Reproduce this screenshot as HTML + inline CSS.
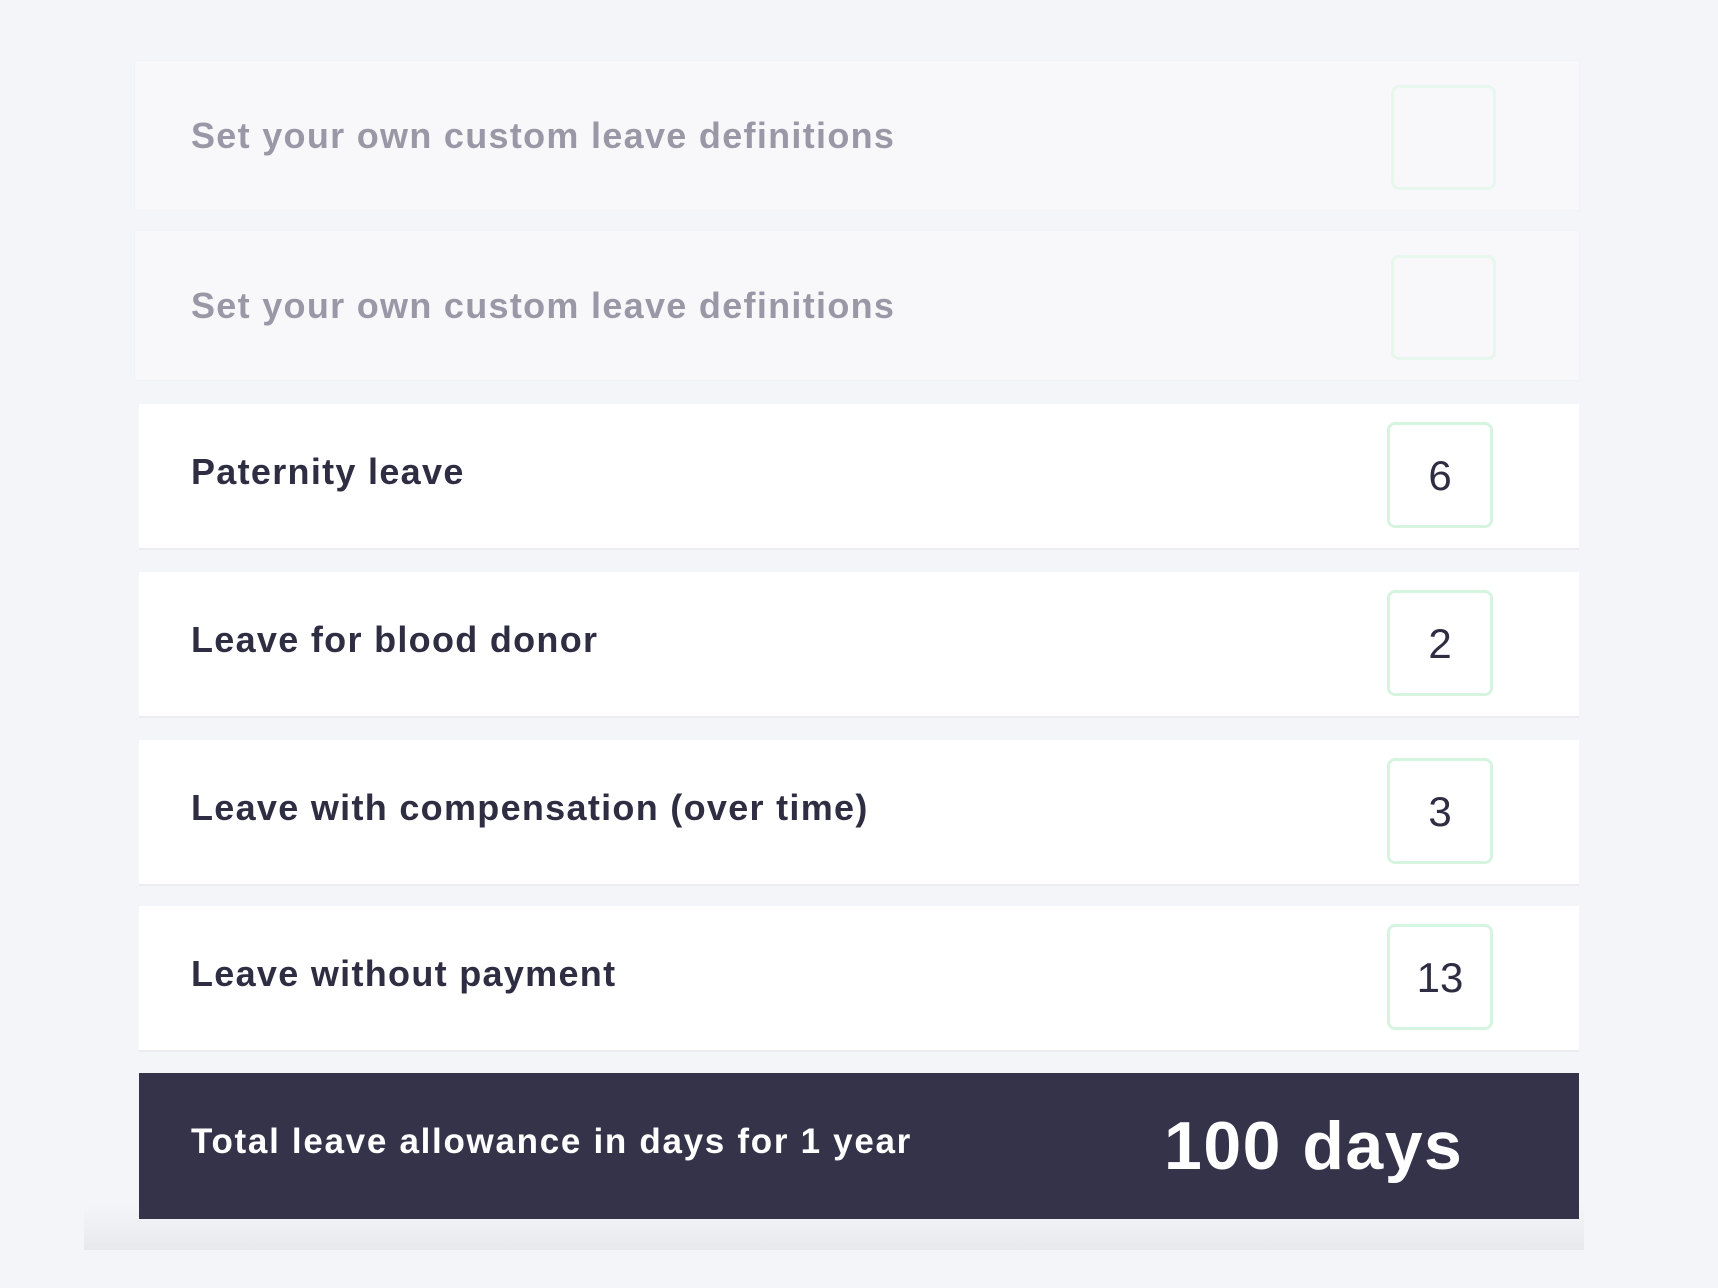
<!DOCTYPE html>
<html><head><style>
body{margin:0;width:1718px;height:1288px;background:#f4f5f8;position:relative;overflow:hidden;font-family:"Liberation Sans",sans-serif;}
.row{position:absolute;left:139px;width:1440px;height:144px;background:#fff;box-shadow:0 2px 0 #ececf0;}
.row.l{left:135px;width:1444px;height:149px;background:#f8f8fa;box-shadow:0 0 0 1px #f1f2f5;}
.t{position:absolute;left:52px;top:-4px;line-height:144px;font-size:36px;font-weight:bold;color:#2f2d42;letter-spacing:1.3px;}
.l .t{left:56px;top:0;line-height:149px;color:#9a98a6;letter-spacing:1.3px;}
.box{position:absolute;left:1248px;top:18px;width:106px;height:106px;border:3px solid #d6f5e0;border-radius:8px;box-sizing:border-box;text-align:center;line-height:102px;font-size:42px;color:#2f2d42;}
.l .box{left:1256px;top:24px;width:105px;height:105px;border-color:#e8f7ee;}
.dark{position:absolute;left:139px;top:1073px;width:1440px;height:146px;background:#353349;}
.shadow{position:absolute;left:84px;top:1205px;width:1500px;height:45px;background:linear-gradient(#f4f5f8,#e8e9ed);}
</style></head><body>
<div class="shadow"></div>
<div class="row l" style="top:61px"><div class="t">Set your own custom leave definitions</div><div class="box"></div></div>
<div class="row l" style="top:231px"><div class="t">Set your own custom leave definitions</div><div class="box"></div></div>
<div class="row" style="top:404px"><div class="t">Paternity leave</div><div class="box">6</div></div>
<div class="row" style="top:572px"><div class="t">Leave for blood donor</div><div class="box">2</div></div>
<div class="row" style="top:740px"><div class="t">Leave with compensation (over time)</div><div class="box">3</div></div>
<div class="row" style="top:906px"><div class="t">Leave without payment</div><div class="box">13</div></div>
<div class="dark">
<div style="position:absolute;left:52px;top:-4px;line-height:146px;font-size:35px;font-weight:bold;color:#fff;letter-spacing:1.7px;">Total leave allowance in days for 1 year</div>
<div style="position:absolute;left:1025px;top:0;line-height:146px;font-size:68px;font-weight:bold;color:#fff;letter-spacing:1.5px;">100 days</div>
</div>
</body></html>
